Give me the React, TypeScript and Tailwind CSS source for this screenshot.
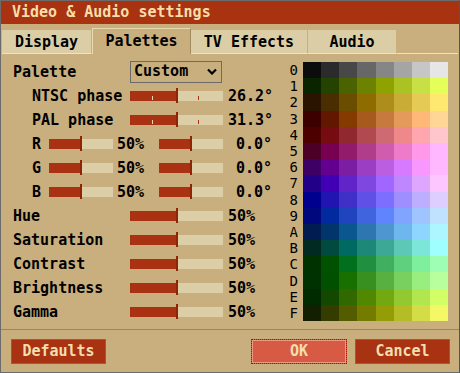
import React from 'react';

const PALETTE: string[][] = [
  ['bg-[#0c0c0c]', 'bg-[#2b2b2b]', 'bg-[#484848]', 'bg-[#676767]', 'bg-[#868686]', 'bg-[#a5a5a5]', 'bg-[#c6c6c6]', 'bg-[#e6e6e6]'],
  ['bg-[#0a2400]', 'bg-[#244300]', 'bg-[#4a6200]', 'bg-[#6d8200]', 'bg-[#8ea300]', 'bg-[#aac222]', 'bg-[#c6e046]', 'bg-[#e4ff58]'],
  ['bg-[#2a1400]', 'bg-[#4a2d00]', 'bg-[#6b4d00]', 'bg-[#8e6c00]', 'bg-[#ad8e1c]', 'bg-[#c8ac36]', 'bg-[#e5ca55]', 'bg-[#ffe86f]'],
  ['bg-[#3c0000]', 'bg-[#621800]', 'bg-[#853a00]', 'bg-[#a65a1e]', 'bg-[#c67a3e]', 'bg-[#e49a5a]', 'bg-[#ffb878]', 'bg-[#ffd696]'],
  ['bg-[#4c0000]', 'bg-[#760c12]', 'bg-[#902830]', 'bg-[#b04a50]', 'bg-[#cf6a72]', 'bg-[#ef888a]', 'bg-[#ffa6ae]', 'bg-[#ffc6cc]'],
  ['bg-[#4c0028]', 'bg-[#780050]', 'bg-[#921c6c]', 'bg-[#b03c8c]', 'bg-[#cf5cac]', 'bg-[#ee7aca]', 'bg-[#ff98e8]', 'bg-[#ffb8ff]'],
  ['bg-[#3e0064]', 'bg-[#640090]', 'bg-[#7c1ea4]', 'bg-[#9c3ec4]', 'bg-[#bc5ee2]', 'bg-[#d87aff]', 'bg-[#f898ff]', 'bg-[#ffb8fe]'],
  ['bg-[#220088]', 'bg-[#4200b4]', 'bg-[#6024c8]', 'bg-[#8046e0]', 'bg-[#a066ff]', 'bg-[#be86ff]', 'bg-[#dea6ff]', 'bg-[#fec6ff]'],
  ['bg-[#00008e]', 'bg-[#2214b0]', 'bg-[#4030c8]', 'bg-[#6050e6]', 'bg-[#7e6eff]', 'bg-[#9e8eff]', 'bg-[#beaeff]', 'bg-[#decdff]'],
  ['bg-[#00087e]', 'bg-[#002a9e]', 'bg-[#2044be]', 'bg-[#4064de]', 'bg-[#6084fe]', 'bg-[#80a4ff]', 'bg-[#a0c4ff]', 'bg-[#c0e2ff]'],
  ['bg-[#001c50]', 'bg-[#00366c]', 'bg-[#0a568e]', 'bg-[#2e76b0]', 'bg-[#4e96d0]', 'bg-[#6eb6ee]', 'bg-[#8ed6ff]', 'bg-[#aef6ff]'],
  ['bg-[#002a22]', 'bg-[#004a40]', 'bg-[#006a62]', 'bg-[#1e8878]', 'bg-[#3ea896]', 'bg-[#5ec8b6]', 'bg-[#7ee6d8]', 'bg-[#9efffe]'],
  ['bg-[#003200]', 'bg-[#005200]', 'bg-[#00701e]', 'bg-[#209040]', 'bg-[#40b060]', 'bg-[#5ed07e]', 'bg-[#7ef09c]', 'bg-[#9effb4]'],
  ['bg-[#003201]', 'bg-[#005000]', 'bg-[#187000]', 'bg-[#389020]', 'bg-[#58b040]', 'bg-[#78d05e]', 'bg-[#98ee7e]', 'bg-[#b8ff9e]'],
  ['bg-[#002a00]', 'bg-[#124800]', 'bg-[#326800]', 'bg-[#528800]', 'bg-[#72a810]', 'bg-[#92c830]', 'bg-[#b2e64e]', 'bg-[#d2ff66]'],
  ['bg-[#141e00]', 'bg-[#343c00]', 'bg-[#545c00]', 'bg-[#747c00]', 'bg-[#949c06]', 'bg-[#b4bc26]', 'bg-[#d4dc46]', 'bg-[#f4f866]'],
];

const HEX = '0123456789ABCDEF'.split('');

type SliderProps = {
  width: number;
  pct: number;
  ticks?: boolean;
};

function Slider({ width, pct, ticks }: SliderProps) {
  const fill = Math.round(width * pct) - 1;
  return (
    <div className="relative h-[10px] shrink-0 bg-[#dccfa7]" style={{ width }}>
      <div className="h-full bg-[#a83211]" style={{ width: fill }} />
      {ticks && (
        <>
          <div className="absolute left-[22px] top-[5px] h-[4px] w-[1px] bg-[#e8d9b0]" />
          <div className="absolute left-[68px] top-[5px] h-[4px] w-[1px] bg-[#a83211]" />
        </>
      )}
      <div
        className="absolute top-[-3px] h-[15px] w-[2px] bg-[#8f2508]"
        style={{ left: fill }}
      />
    </div>
  );
}

function Row({ children }: { children: React.ReactNode }) {
  return <div className="flex h-[24px] items-center">{children}</div>;
}

export default function App() {
  const tabs = [
    { label: 'Display', w: 'w-[90px]' },
    { label: 'Palettes', w: 'w-[99px]', active: true },
    { label: 'TV Effects', w: 'w-[117px]' },
    { label: 'Audio', w: 'w-[89px]' },
  ];

  return (
    <div className="flex h-[373px] w-[460px] flex-col border border-[#6b6b6b] border-r-[#555] bg-[#c9af7e] font-['DejaVu_Sans_Mono',monospace] text-[15px] font-bold leading-none text-black">
      {/* title */}
      <div className="flex h-[23px] shrink-0 items-center bg-[#a93211] pl-[11px] text-[#f5dfa9]">
        Video &amp; Audio settings
      </div>

      {/* tabs */}
      <div className="mt-[4px] flex h-[26px] shrink-0 items-end pl-[1px]">
        {tabs.map((t) =>
          t.active ? (
            <div
              key={t.label}
              className={`${t.w} flex h-[26px] items-center justify-center border-t border-l border-r border-t-[#e8d9ae] border-l-[#e8d9ae] border-r-[#a08a60] bg-[#c9af7e]`}
            >
              {t.label}
            </div>
          ) : (
            <div
              key={t.label}
              className={`${t.w} flex h-[24px] items-center justify-center border-r border-b border-r-[#c9af7e] border-b-[#f3e4b8] bg-[#dbcea6] pt-[1px]`}
            >
              {t.label}
            </div>
          )
        )}
        <div className="mr-[1px] h-[1px] flex-1 bg-[#f3e4b8]" />
      </div>

      {/* content */}
      <div className="flex flex-1 pt-[6px]">
        <div className="flex flex-col pl-[12px]">
          <Row>
            <span className="w-[117px]">Palette</span>
            <div className="mt-[-1px] flex h-[22px] w-[92px] items-center justify-between border border-[#6b6b6b] pl-[3px] pr-[4px]">
              <span>Custom</span>
              <svg width="10" height="7" viewBox="0 0 10 7">
                <polyline points="1,1.5 5,5.5 9,1.5" fill="none" stroke="#000" strokeWidth="2.2" />
              </svg>
            </div>
          </Row>
          <Row>
            <span className="box-content w-[98px] pl-[19px]">NTSC phase</span>
            <Slider width={93} pct={0.5} ticks />
            <span className="ml-[5px]">26.2°</span>
          </Row>
          <Row>
            <span className="box-content w-[98px] pl-[19px]">PAL phase</span>
            <Slider width={93} pct={0.5} ticks />
            <span className="ml-[5px]">31.3°</span>
          </Row>
          {['R', 'G', 'B'].map((c) => (
            <Row key={c}>
              <span className="box-content w-[17px] pl-[19px]">{c}</span>
              <Slider width={64} pct={0.5} />
              <span className="ml-[4px] w-[27px]">50%</span>
              <span className="w-[15px]" />
              <Slider width={64} pct={0.5} />
              <span className="w-[49px] text-right">0.0°</span>
            </Row>
          ))}
          {['Hue', 'Saturation', 'Contrast', 'Brightness', 'Gamma'].map((l) => (
            <Row key={l}>
              <span className="w-[117px]">{l}</span>
              <Slider width={93} pct={0.5} />
              <span className="ml-[5px]">50%</span>
            </Row>
          ))}
        </div>

        {/* palette grid */}
        <div className="ml-auto mr-[11px] mt-[2px] flex">
          <div className="grid h-[259px] grid-rows-[repeat(16,1fr)] text-[14px] font-normal">
            {HEX.map((h) => (
              <div key={h} className="flex items-center justify-end overflow-hidden">
                {h}
              </div>
            ))}
          </div>
          <div className="ml-[5px] grid h-[259px] w-[145px] grid-cols-8 grid-rows-[repeat(16,1fr)]">
            {PALETTE.flat().map((cls, i) => (
              <div key={i} className={cls} />
            ))}
          </div>
        </div>
      </div>

      {/* footer */}
      <div className="h-[1px] shrink-0 bg-[#9c8660]" />
      <div className="flex h-[42px] shrink-0 items-start pt-[9px] text-[#f3dfae]">
        <button className="ml-[10px] flex h-[25px] w-[95px] items-center justify-center border border-[#6b6b6b] bg-[#a83211]">
          Defaults
        </button>
        <button className="ml-auto flex h-[25px] w-[96px] items-center justify-center border border-dotted border-[#8a1a00] bg-[#d75b44] shadow-[inset_0_0_0_1px_#eb9a84]">
          OK
        </button>
        <button className="ml-[8px] mr-[9px] flex h-[25px] w-[95px] items-center justify-center border border-[#6b6b6b] bg-[#a83211]">
          Cancel
        </button>
      </div>
    </div>
  );
}
